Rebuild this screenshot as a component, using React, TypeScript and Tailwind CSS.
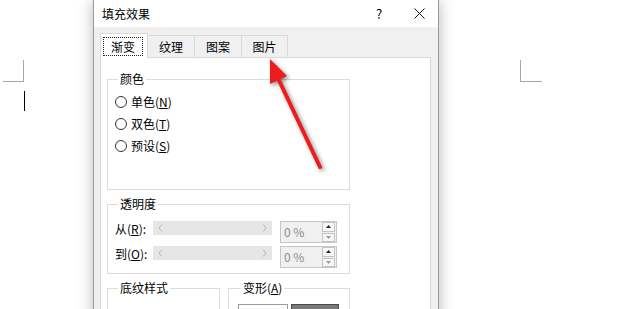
import { ReactNode } from "react";

const Radio = ({ label }: { label: ReactNode }) => (
  <div className="flex items-center h-[22px]">
    <span className="w-[12px] h-[12px] rounded-full border border-[#333] bg-white mr-[4px]" />
    <span>{label}</span>
  </div>
);

const Chevron = ({ dir }: { dir: "l" | "r" }) => (
  <svg width="5" height="8" viewBox="0 0 5 8">
    <polyline
      points={dir === "l" ? "4,0.5 1,4 4,7.5" : "1,0.5 4,4 1,7.5"}
      fill="none"
      stroke="#b4b4b4"
      strokeWidth="1"
    />
  </svg>
);

const Spinner = () => (
  <div className="w-[57px] h-[22px] border border-[#c6c6c6] bg-[#f0f0f0] flex items-center pl-[3px] pr-[1px]">
    <span className="flex-1 text-[#8c8c8c]">0 %</span>
    <div className="w-[13px] h-[20px] flex flex-col gap-[1px]">
      <div className="flex-1 border border-[#c4c4c4] bg-[#f7f7f7] flex items-center justify-center">
        <svg width="5" height="3" viewBox="0 0 5 3">
          <polygon points="0,3 2.5,0 5,3" fill="#222" />
        </svg>
      </div>
      <div className="flex-1 border border-[#c4c4c4] bg-[#f7f7f7] flex items-center justify-center">
        <svg width="5" height="3" viewBox="0 0 5 3">
          <polygon points="0,0 2.5,3 5,0" fill="#9a9a9a" />
        </svg>
      </div>
    </div>
  </div>
);

const SliderRow = ({ label, className }: { label: ReactNode; className?: string }) => (
  <div className={"flex items-start h-[22px] " + (className ?? "")}>
    <span className="w-[38px] h-[14px] leading-[14px] mt-[1px]">{label}</span>
    <div className="w-[119px] h-[14px] bg-[#e6e6e6] flex items-center justify-between px-[5px]">
      <Chevron dir="l" />
      <Chevron dir="r" />
    </div>
    <div className="ml-[8px]">
      <Spinner />
    </div>
  </div>
);

const App = () => {
  return (
    <div className="relative w-[620px] h-[309px] bg-white overflow-hidden font-['Noto_Sans_CJK_SC','Microsoft_YaHei',sans-serif] text-[12px] text-black">
      {/* page corner marks and cursor */}
      <div className="absolute left-[3px] top-[60px] w-[21px] h-[22px] border-r border-b border-[#a6a6a6]" />
      <div className="absolute left-[24px] top-[91px] w-[1px] h-[20px] bg-black" />
      <div className="absolute left-[520px] top-[60px] w-[22px] h-[22px] border-l border-b border-[#a6a6a6]" />

      {/* dialog */}
      <div className="absolute left-[93px] top-0 w-[346px] h-[340px] border-x border-[#9a9a9a] bg-[#f0f0f0] shadow-[0_0_14px_rgba(0,0,0,0.28)] flex flex-col">
        <div className="h-[27px] bg-white flex items-center pl-[8px] pr-[4px] shrink-0">
          <span>填充效果</span>
          <span className="ml-auto w-[20px] text-center text-[13px]">?</span>
          <span className="ml-[15px] w-[30px] flex justify-center">
            <svg width="11" height="11" viewBox="0 0 11 11">
              <path d="M0.5 0.5 L10.5 10.5 M10.5 0.5 L0.5 10.5" stroke="#111" strokeWidth="1" />
            </svg>
          </span>
        </div>

        <div className="pl-[6px] pt-[6px] flex flex-col">
          {/* tabs */}
          <div className="flex items-end h-[24px]">
            <div className="relative z-10 w-[48px] h-[25px] -mb-px border border-b-0 border-[#d9d9d9] bg-white pl-[2px] pr-[4px] pt-[3px] pb-[2px]">
              <div className="h-full border border-dotted border-[#222] flex items-center justify-center">渐变</div>
            </div>
            <div className="w-[47px] h-[22px] border-t border-r border-[#d9d9d9] flex items-center justify-center">纹理</div>
            <div className="w-[47px] h-[22px] border-t border-r border-[#d9d9d9] flex items-center justify-center">图案</div>
            <div className="w-[46px] h-[22px] border-t border-r border-[#d9d9d9] flex items-center justify-center">图片</div>
          </div>

          {/* panel */}
          <div className="w-[331px] h-[300px] border border-[#d9d9d9] bg-white pl-[6px] pt-[13px]">
            <fieldset className="w-[243px] border border-[#dcdcdc] pl-[7px] pt-[4px] pb-[32px]">
              <legend className="ml-[3px] px-[2px] leading-[16px]">颜色</legend>
              <Radio label={<>单色(<u>N</u>)</>} />
              <Radio label={<>双色(<u>T</u>)</>} />
              <Radio label={<>预设(<u>S</u>)</>} />
            </fieldset>

            <fieldset className="mt-[6px] w-[243px] border border-[#dcdcdc] pl-[7px] pt-[9px] pb-[5px]">
              <legend className="ml-[3px] px-[2px] leading-[16px]">透明度</legend>
              <SliderRow label={<>从(<u>R</u>):</>} />
              <SliderRow label={<>到(<u>O</u>):</>} className="mt-[3px]" />
            </fieldset>

            <div className="mt-[6px] flex items-start">
              <fieldset className="w-[113px] h-[80px] border border-[#dcdcdc] pl-[7px] pt-[10px]">
                <legend className="ml-[3px] px-[2px] leading-[16px]">底纹样式</legend>
                <Radio label={<>水平(<u>Z</u>)</>} />
              </fieldset>
              <fieldset className="ml-[8px] w-[122px] h-[80px] border border-[#dcdcdc] pl-[9px] pt-[8px]">
                <legend className="ml-[3px] px-[2px] leading-[16px]">变形(<u>A</u>)</legend>
                <div className="flex gap-[3px]">
                  <div className="w-[50px] h-[40px] border border-[#9c9c9c] bg-white" />
                  <div className="w-[48px] h-[40px] border border-[#4a4a4a] bg-[#7a7a7a]" />
                </div>
              </fieldset>
            </div>
          </div>
        </div>
      </div>

      {/* red arrow */}
      <svg
        className="absolute left-0 top-0 pointer-events-none drop-shadow-[2px_2px_2px_rgba(0,0,0,0.45)]"
        width="620"
        height="309"
        viewBox="0 0 620 309"
      >
        <line x1="320" y1="167" x2="276" y2="74" stroke="#ee1c1c" strokeWidth="4" strokeLinecap="round" />
        <polygon points="270,59 287,76 270,84" fill="#ee1c1c" />
      </svg>
    </div>
  );
};

export default App;
